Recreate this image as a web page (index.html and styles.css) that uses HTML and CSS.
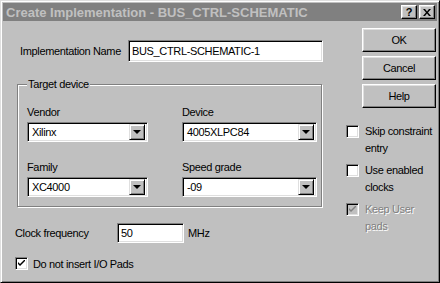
FILE: index.html
```html
<!DOCTYPE html>
<html lang="en">
<head>
  <meta charset="UTF-8">
  <title>Create Implementation - BUS_CTRL-SCHEMATIC</title>
  <link rel="stylesheet" href="styles.css">
</head>
<body>
  <div class="window">
    <div class="titlebar">
      <span class="title">Create Implementation - BUS_CTRL-SCHEMATIC</span>
      <div class="title-buttons">
        <span class="tbtn help-btn">?</span>
        <span class="tbtn close-btn">
          <svg width="8" height="7" viewBox="0 0 8 7"><path d="M0 0h2l2 2.5 2-2.5h2l-3 3.5 3 3.5h-2l-2-2.5-2 2.5h-2l3-3.5z" fill="#000"/></svg>
        </span>
      </div>
    </div>

    <div class="content">
      <div class="left">
        <div class="name-row">
          <label class="name-label">Implementation Name</label>
          <div class="field name-field">BUS_CTRL-SCHEMATIC-1</div>
        </div>

        <fieldset class="group">
          <legend>Target device</legend>
          <div class="grid">
            <div class="cell">
              <label>Vendor</label>
              <div class="combo"><span class="combo-text">Xilinx</span><span class="drop"><i class="arrow"></i></span></div>
            </div>
            <div class="cell">
              <label>Device</label>
              <div class="combo"><span class="combo-text">4005XLPC84</span><span class="drop"><i class="arrow"></i></span></div>
            </div>
            <div class="cell">
              <label>Family</label>
              <div class="combo"><span class="combo-text">XC4000</span><span class="drop"><i class="arrow"></i></span></div>
            </div>
            <div class="cell">
              <label>Speed grade</label>
              <div class="combo"><span class="combo-text">-09</span><span class="drop"><i class="arrow"></i></span></div>
            </div>
          </div>
        </fieldset>

        <div class="clock-row">
          <label class="clock-label">Clock frequency</label>
          <div class="field clock-field">50</div>
          <span class="unit">MHz</span>
        </div>

        <div class="check-row">
          <span class="box checked">
            <svg width="7" height="7" viewBox="0 0 7 7"><path d="M0 2l2 2 5-5v2l-5 5-2-2z" fill="#000"/></svg>
          </span>
          <span>Do not insert I/O Pads</span>
        </div>
      </div>

      <div class="right">
        <button class="btn">OK</button>
        <button class="btn">Cancel</button>
        <button class="btn">Help</button>

        <div class="opt">
          <span class="box"></span>
          <span class="opt-text">Skip constraint entry</span>
        </div>
        <div class="opt">
          <span class="box"></span>
          <span class="opt-text">Use enabled clocks</span>
        </div>
        <div class="opt disabled">
          <span class="box checked">
            <svg width="7" height="7" viewBox="0 0 7 7"><path d="M0 2l2 2 5-5v2l-5 5-2-2z" fill="#808080"/></svg>
          </span>
          <span class="opt-text">Keep User pads</span>
        </div>
      </div>
    </div>
  </div>
</body>
</html>
```

FILE: styles.css
```css
body {
  margin: 0;
  background: #c0c0c0;
  font-family: "Liberation Sans", Arial, sans-serif;
  font-size: 11px;
  letter-spacing: -0.35px;
  color: #000;
}

.window {
  width: 440px;
  height: 283px;
  box-sizing: border-box;
  background: #c0c0c0;
  border: 1px solid;
  border-color: #dfdfdf #000 #000 #dfdfdf;
  box-shadow: inset 1px 1px #fff, inset -1px -1px #808080;
  padding: 2px;
  display: flex;
  flex-direction: column;
}

.titlebar {
  height: 18px;
  background: #808080;
  display: flex;
  align-items: center;
  justify-content: space-between;
  padding: 0 2px 0 3px;
}

.title {
  color: #c0c0c0;
  font-weight: bold;
  font-size: 13px;
  letter-spacing: 0;
}

.title-buttons {
  display: flex;
  gap: 2px;
}

.tbtn {
  width: 16px;
  height: 14px;
  box-sizing: border-box;
  background: #c0c0c0;
  border: 1px solid;
  border-color: #fff #000 #000 #fff;
  box-shadow: inset -1px -1px #808080, inset 1px 1px #dfdfdf;
  display: flex;
  align-items: center;
  justify-content: center;
  font-weight: bold;
  font-size: 11px;
}

.content {
  flex: 1;
  display: flex;
}

.left {
  width: 327px;
  padding-left: 12px;
}

.name-row {
  display: flex;
  align-items: center;
  margin: 19px 0 0 5px;
}

.name-label {
  width: 108px;
}

.field {
  box-sizing: border-box;
  background: #fff;
  border: 1px solid;
  border-color: #808080 #fff #fff #808080;
  box-shadow: inset 1px 1px #000, inset -1px -1px #dfdfdf;
  padding: 0 3px;
  display: flex;
  align-items: center;
}

.name-field {
  width: 195px;
  height: 22px;
}

.group {
  margin: 16px 0 0 2px;
  width: 305px;
  box-sizing: border-box;
  border: 1px solid #808080;
  box-shadow: inset 1px 1px #fff, 1px 1px #fff;
  padding: 14px 3px 9px 9px;
}

.group legend {
  padding: 0 1px;
  margin-left: 0;
  line-height: 13px;
  background: #c0c0c0;
}

.grid {
  display: grid;
  grid-template-columns: 121px 135px;
  column-gap: 34px;
  row-gap: 18px;
}

.cell label {
  display: block;
  line-height: 14px;
  margin-bottom: 3px;
}

.combo {
  height: 20px;
  box-sizing: border-box;
  background: #fff;
  border: 1px solid;
  border-color: #808080 #fff #fff #808080;
  box-shadow: inset 1px 1px #000, inset -1px -1px #dfdfdf;
  padding: 2px;
  display: flex;
  align-items: center;
}

.combo-text {
  flex: 1;
  padding-left: 2px;
}

.drop {
  width: 16px;
  height: 16px;
  box-sizing: border-box;
  background: #c0c0c0;
  border: 1px solid;
  border-color: #dfdfdf #000 #000 #dfdfdf;
  box-shadow: inset 1px 1px #fff, inset -1px -1px #808080;
  display: flex;
  align-items: center;
  justify-content: center;
}

.arrow {
  width: 0;
  height: 0;
  border-left: 4px solid transparent;
  border-right: 4px solid transparent;
  border-top: 4px solid #000;
}

.clock-row {
  display: flex;
  align-items: center;
  margin-top: 16px;
}

.clock-label {
  width: 102px;
}

.clock-field {
  width: 67px;
  height: 20px;
}

.unit {
  margin-left: 4px;
}

.check-row {
  display: flex;
  align-items: center;
  gap: 5px;
  margin-top: 14px;
}

.box {
  width: 13px;
  height: 13px;
  flex-shrink: 0;
  box-sizing: border-box;
  background: #fff;
  border: 1px solid;
  border-color: #808080 #fff #fff #808080;
  box-shadow: inset 1px 1px #000, inset -1px -1px #dfdfdf;
  display: flex;
  align-items: center;
  justify-content: center;
}

.right {
  flex: 1;
  padding-left: 11px;
}

.btn {
  display: block;
  width: 74px;
  height: 24px;
  margin: 7px 0 0 16px;
  padding: 0;
  box-sizing: border-box;
  background: #c0c0c0;
  border: 1px solid;
  border-color: #fff #000 #000 #fff;
  box-shadow: inset -1px -1px #808080, inset 1px 1px #dfdfdf;
  font-family: inherit;
  font-size: 11px;
  letter-spacing: inherit;
  color: #000;
}

.btn + .btn {
  margin-top: 4px;
}

.opt {
  display: flex;
  align-items: flex-start;
  gap: 6px;
  margin-top: 5px;
  line-height: 17px;
}

.opt:first-of-type {
  margin-top: 15px;
}

.opt .box {
  margin-top: 2px;
}

.opt-text {
  width: 72px;
}

.disabled .box {
  background: #c0c0c0;
}

.disabled .opt-text {
  color: #808080;
  text-shadow: 1px 1px #fff;
}
```
